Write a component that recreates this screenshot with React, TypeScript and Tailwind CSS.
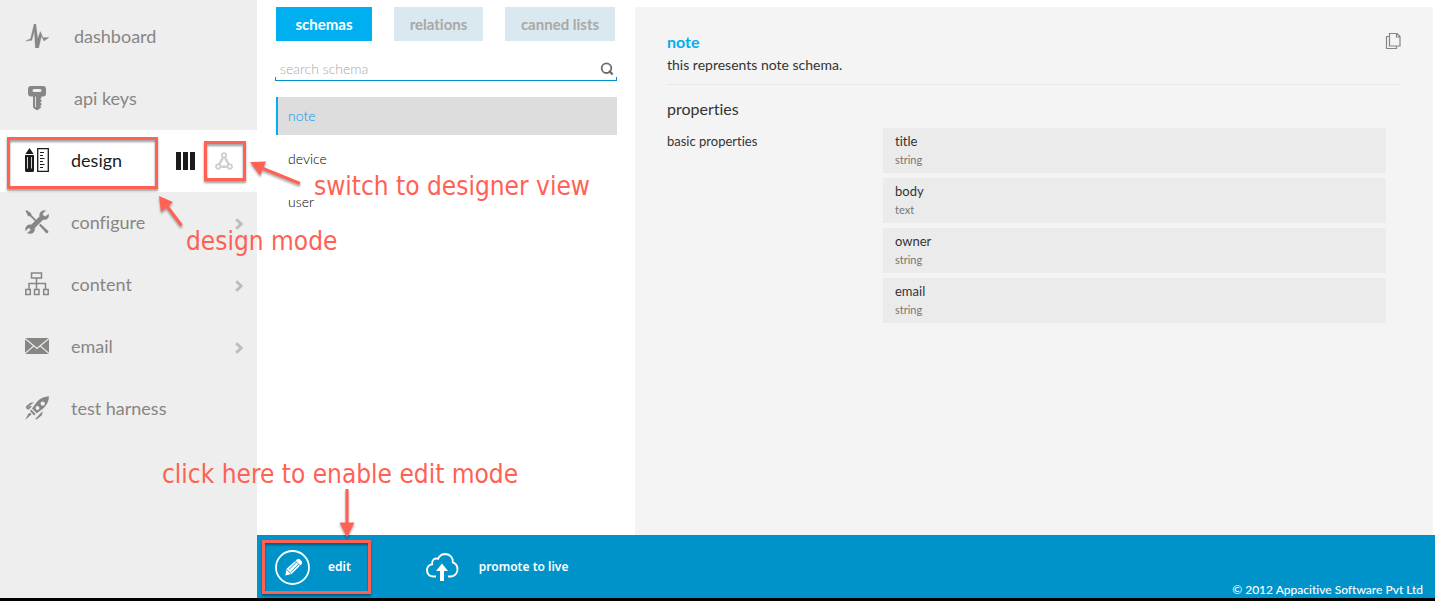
import type { ReactNode } from "react";

function Glyph({ children }: { children: ReactNode }) {
  return (
    <svg viewBox="0 0 24 24" className="size-6 shrink-0" fill="currentColor" aria-hidden="true">
      {children}
    </svg>
  );
}

const PulseIcon = () => (
  <Glyph>
    <path d="M.8 16.9 5.6 14.7 9.2 0h1.6l1.9 15 2.6-7.4L18 13.800l5.800-.4L19 17.100 16.400 12l-2.800 12h-3.200L9.400 6.400 6.800 16.300Z" stroke="currentColor" strokeWidth=".4" />
  </Glyph>
);

const KeyIcon = () => (
  <Glyph>
    <path
      fillRule="evenodd"
      d="M6 0h12a3 3 0 0 1 3 3v4.500a3 3 0 0 1-3 3h-1.500v1.500l-1.500 1 1.500 1v1.500l-1.500 1 1.500 1v1.500l-1.500 1 1.500 1L13 24h-2l-3-2.500v-11H6a3 3 0 0 1-3-3V3a3 3 0 0 1 3-3Zm3 3a1.500 1.500 0 0 0 0 3h6a1.500 1.500 0 0 0 0-3ZM10 10.500V21h.9V10.500Z"
    />
  </Glyph>
);

const DesignIcon = () => (
  <Glyph>
    <path d="M4.500 0 8.600 6H.4ZM0 7h9v15.500A1.500 1.500 0 0 1 7.500 24h-6A1.500 1.500 0 0 1 0 22.500Z" />
    <path d="M2.500 9v11.500M6.500 9v11.500" stroke="#fff" strokeWidth=".8" />
    <path d="M12.700.7h10.600v22.600H12.700Z" fill="none" stroke="currentColor" strokeWidth="1.300" />
    <path d="M15 4.500h4M15 7.500h3M15 10.500h4.500M15 13.500h3M15 16.500h4.500M15 19.500h3" stroke="currentColor" strokeWidth="1.200" />
  </Glyph>
);

const ToolsIcon = () => (
  <Glyph>
    <path d="M.5.800 2 .3 6 3.200 6.600 5.300 12.300 11 11 12.300 5.300 6.600 3 6Z" />
    <path d="m14 15.200 1.500-1.500 7.700 7.300c.8 1.300-.8 2.900-2.100 2.100Z" />
    <path
      d="M23.700 4.200c.7 3.600-2.300 6.200-5.500 5.300L9.600 18.100c.7 3.300-1.900 6-5.300 5.400L2.500 23.100 5.800 20 5.200 18.400 3.500 17.900.6 20.700C-.3 17 2.700 14 6.200 14.900l8.500-8.500C14 3 16.700-.1 20.500.7L17.600 3.500 18.200 5.700 20.400 6.500Z"
      stroke="currentColor"
      strokeWidth=".4"
    />
  </Glyph>
);

const SitemapIcon = () => (
  <Glyph>
    <path
      d="M6.500 1h10v5h-10ZM11.500 6v11M4 17v-5.500h16.500V17M.8 17.500h4.500v5H.8ZM9.500 17.500H14v5H9.500ZM18.700 17.500h4.500v5h-4.500Z"
      fill="none"
      stroke="currentColor"
      strokeWidth="1.500"
    />
  </Glyph>
);

const MailIcon = () => (
  <Glyph>
    <path d="M0 4h24v16H0Z" />
    <path d="m0 4.500 12 10 12-10M0 19.600l8.800-7.700M24 19.600l-8.800-7.700" fill="none" stroke="#eee" strokeWidth="1.200" />
  </Glyph>
);

const RocketIcon = () => (
  <Glyph>
    <path
      fillRule="evenodd"
      d="M24 .2c-.2 5-2 8.700-5.300 11.800l-6.900 5.300-4.800-4.800 5.200-7C15.500 2 19.300.4 24 .2Zm-6.300 5.200a2.200 2.200 0 1 0 0 4.400 2.200 2.200 0 0 0 0-4.400ZM12.500 10a2 2 0 1 0 0 4 2 2 0 0 0 0-4Z"
    />
    <path d="M9 6.300 1.200 12.700.8 10.500 5.400 6.800ZM7 10.200 3.600 13.800 1.500 12.700 5 10ZM17.500 15.300l-.4 3.600-5.400 4.700-1.500-.6ZM6.200 13.600l4.400 4.300-1.500 1.500L5 15ZM6.600 18.300.1 24l3.200-6.200 2-1Z" />
  </Glyph>
);

const Chevron = () => (
  <svg viewBox="0 0 8 12" className="mt-0.5 h-3 w-2 shrink-0 text-[#bcbcbc]" aria-hidden="true">
    <path d="m1.200 1.200 5 4.800-5 4.800" fill="none" stroke="currentColor" strokeWidth="2.900" />
  </svg>
);

const NetworkIcon = () => (
  <svg viewBox="0 0 18 18" className="size-[18px]" fill="none" stroke="currentColor" strokeWidth="1.900" aria-hidden="true">
    <circle cx="9" cy="3.300" r="2.200" />
    <circle cx="3.200" cy="14.600" r="2.200" />
    <circle cx="14.800" cy="14.600" r="2.200" />
    <path d="M8 5.500 4.200 12.500M10 5.500l3.800 7M5.500 14.800h7" strokeWidth="2.600" />
  </svg>
);

const navItems = [
  { label: "dashboard", icon: <PulseIcon />, wide: true },
  { label: "api keys", icon: <KeyIcon />, wide: true },
  { label: "design", icon: <DesignIcon />, active: true },
  { label: "configure", icon: <ToolsIcon />, more: true },
  { label: "content", icon: <SitemapIcon />, more: true },
  { label: "email", icon: <MailIcon />, more: true },
  { label: "test harness", icon: <RocketIcon /> },
];

const properties = [
  { name: "title", type: "string" },
  { name: "body", type: "text" },
  { name: "owner", type: "string" },
  { name: "email", type: "string" },
];

function Sidebar() {
  return (
    <nav className="w-[257px] shrink-0 bg-[#eee] pt-1.5">
      <ul>
        {navItems.map((item) => (
          <li
            key={item.label}
            className={`flex h-[62px] items-center pl-[25px] ${item.active ? "bg-white text-[#1c1c1c]" : "text-[#868684]"}`}
          >
            <a href="#" className={`flex flex-1 items-center pb-0.5 text-lg ${item.wide ? "gap-[25px]" : "gap-[22px]"}`}>
              {item.icon}
              {item.label}
            </a>
            {item.more && (
              <span className="pr-3.5">
                <Chevron />
              </span>
            )}
            {item.active && (
              <div className="flex items-center gap-5 pr-6">
                <button type="button" aria-label="List view" className="flex gap-0.5">
                  <span className="h-[18px] w-[5px] bg-current" />
                  <span className="h-[18px] w-[5px] bg-current" />
                  <span className="h-[18px] w-[5px] bg-current" />
                </button>
                <button type="button" aria-label="Designer view" className="text-[#d0d0d0]">
                  <NetworkIcon />
                </button>
              </div>
            )}
          </li>
        ))}
      </ul>
    </nav>
  );
}

function SchemaList() {
  const tab = "h-[34px] text-[15px] font-bold";
  return (
    <section className="w-[378px] shrink-0 pt-[7px] pr-[18px] pl-[19px]">
      <div className="flex gap-[22px]">
        <button type="button" className={`${tab} w-24 bg-[#00aff0] text-white`}>
          schemas
        </button>
        <button type="button" className={`${tab} w-[89px] bg-[#dae8ef] text-[#a8a8a8]`}>
          relations
        </button>
        <button type="button" className={`${tab} w-[110px] bg-[#dae8ef] text-[#a8a8a8]`}>
          canned lists
        </button>
      </div>
      <div className="relative mt-4 -ml-px flex h-6 items-center pr-[3px] pl-[5px]">
        <input
          type="text"
          aria-label="search schema"
          placeholder="search schema"
          className="min-w-0 flex-1 text-sm font-light outline-none placeholder:text-[#a8a8a8]"
        />
        <svg viewBox="0 0 14 14" className="size-3.5 text-[#6a6a6a]" fill="none" stroke="currentColor" aria-hidden="true">
          <circle cx="6.500" cy="6.200" r="4.800" strokeWidth="1.800" />
          <path d="m9 8.800 3.700 3.700" strokeWidth="2.200" />
        </svg>
        <span className="pointer-events-none absolute inset-x-0 bottom-0 h-1 border-x border-b border-[#0092c8]" />
      </div>
      <ul className="mt-4 flex flex-col gap-[5px] text-sm font-light text-black">
        <li>
          <a href="#" className="flex h-[38px] items-center border-l-2 border-[#00aff0] bg-[#ddd] pl-2.5 text-[#0099e8]">
            note
          </a>
        </li>
        {["device", "user"].map((name) => (
          <li key={name}>
            <a href="#" className="flex h-[38px] items-center pl-3">
              {name}
            </a>
          </li>
        ))}
      </ul>
    </section>
  );
}

function SchemaDetail() {
  return (
    <main className="mt-[7px] mr-0.5 min-w-0 flex-1 bg-[#f4f4f4] px-8 pt-[23px] text-[#333]">
      <header className="flex items-start justify-between border-b border-[#e8e8e8] pb-[9px]">
        <div>
          <h1 className="text-base leading-6 font-bold text-[#00aff0]">note</h1>
          <p className="text-sm leading-[21px]">this represents note schema.</p>
        </div>
        <button type="button" aria-label="Copy schema" className="mt-0.5 text-[#858585]">
          <svg viewBox="0 0 16 18" className="h-[18px] w-4" fill="none" stroke="currentColor" strokeWidth="1.200" aria-hidden="true">
            <path d="M4.500 1.500h7.500l3 3V14H4.500ZM11.500 1.500V5H15M4 4.500H1.500v12h10V14.500" />
          </svg>
        </button>
      </header>
      <h2 className="mt-3 text-base leading-6">properties</h2>
      <div className="mt-[7px] mr-[15px] flex">
        <h3 className="w-[216px] shrink-0 pt-[3px] text-[13px] leading-5">basic properties</h3>
        <ul className="flex flex-1 flex-col gap-[5px]">
          {properties.map((p) => (
            <li key={p.name} className="bg-[#ebebeb] px-3 pt-[3px] pb-1">
              <p className="text-[13px] leading-5">{p.name}</p>
              <p className="text-[11px] leading-[18px] text-[#757575]">{p.type}</p>
            </li>
          ))}
        </ul>
      </div>
    </main>
  );
}

function ActionBar() {
  return (
    <footer className="flex h-[63px] items-center bg-[#0093ca] pr-3 pl-[18px] text-xs text-white">
      <button type="button" className="flex items-center gap-[17px] font-['Noto_Sans',sans-serif] font-semibold">
        <svg viewBox="0 0 36 36" className="size-9" aria-hidden="true">
          <circle cx="17.500" cy="18.500" r="16.500" fill="none" stroke="currentColor" strokeWidth="1.800" />
          <path d="m10.300 26.500 1.200-6.700L22.500 10h2l2.500 2.500v2.200L16.500 25Z" fill="currentColor" />
          <path d="m11.700 20.600 4.300 4M14 20.500l7.300-7.200M16.200 22.600l7.300-7.200M20 11.700l5.200 5" stroke="#0093ca" strokeWidth=".9" />
        </svg>
        edit
      </button>
      <button type="button" className="ml-[74px] flex items-center gap-5 font-['Noto_Sans',sans-serif] font-semibold">
        <svg viewBox="0 0 34 30" className="h-[30px] w-[34px]" aria-hidden="true">
          <path
            d="M11 24.500H8.500C4 24.500 2 21.500 2 18.300c0-3.300 2.400-5.700 5.200-6.100C6.300 8.500 9.500 5.600 13 6.800 15 2.700 18 2 20.500 2c4.800.2 7.700 4 7.300 8.300 3 1.200 4.700 3.900 4.700 7 0 4.200-3 7.200-6.500 7.200h-3"
            fill="none"
            stroke="currentColor"
            strokeWidth="1.900"
          />
          <path d="M17 11.500 23 19h-4v10h-4V19h-4Z" fill="currentColor" />
        </svg>
        promote to live
      </button>
      <p className="mt-auto ml-auto pb-px leading-[14px] font-medium">© 2012 Appacitive Software Pvt Ltd</p>
    </footer>
  );
}

function Annotations() {
  const note =
    "absolute whitespace-nowrap font-['DejaVu_Sans_Condensed','Noto_Sans',sans-serif] text-[26px] leading-8";
  const frame = "absolute border-[3px] border-[#ff6155] drop-shadow-[0_2px_1px_rgba(0,0,0,0.4)]";
  return (
    <div className="pointer-events-none absolute inset-0 text-[#ff6155]">
      <div className={`${frame} top-[137px] left-[7px] h-[52px] w-[151px]`} />
      <div className={`${frame} top-[141px] left-[204px] h-10 w-[42px]`} />
      <div className={`${frame} top-[540px] left-[262px] h-[54px] w-[109px]`} />
      <svg
        viewBox="0 0 380 540"
        className="absolute top-0 left-0 h-[540px] w-[380px] drop-shadow-[0_2px_1px_rgba(0,0,0,0.35)]"
        fill="currentColor"
        stroke="currentColor"
        aria-hidden="true"
      >
        <path d="m300 183.500-37-15M181.500 225.500l-15-20M347 489v38" strokeWidth="3" />
        <path d="m250 162 16-.5-6 14ZM159 196l14 6-12 10ZM339.500 522.500h15l-7.500 15Z" stroke="none" />
      </svg>
      <p className={`${note} top-[170px] left-[314px]`}>switch to designer view</p>
      <p className={`${note} top-[225px] left-[186px]`}>design mode</p>
      <p className={`${note} top-[458px] left-[162px]`}>click here to enable edit mode</p>
    </div>
  );
}

export default function App() {
  return (
    <div className="relative flex min-h-screen flex-col border-b-[3px] border-black bg-white font-['Lato',sans-serif] [font-variant-ligatures:none]">
      <div className="flex flex-1">
        <Sidebar />
        <div className="flex min-w-0 flex-1 flex-col">
          <div className="flex flex-1">
            <SchemaList />
            <SchemaDetail />
          </div>
          <ActionBar />
        </div>
      </div>
      <Annotations />
    </div>
  );
}
